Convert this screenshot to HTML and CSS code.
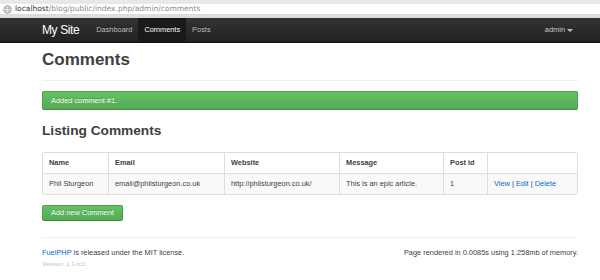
FILE: index.html
```html
<!DOCTYPE html>
<html>
<head>
<meta charset="utf-8">
<title>Comments</title>
<link rel="stylesheet" href="styles.css">
</head>
<body>
<div class="chrome">
  <svg class="globe" width="9" height="9" viewBox="0 0 9 9"><circle cx="4.5" cy="4.5" r="3.8" fill="none" stroke="#9a9a9a" stroke-width="0.9"/><ellipse cx="4.5" cy="4.5" rx="1.6" ry="3.8" fill="none" stroke="#9a9a9a" stroke-width="0.7"/><path d="M0.8 3.2H8.2M0.8 5.8H8.2" stroke="#9a9a9a" stroke-width="0.7"/></svg>
  <span class="url"><span class="host">localhost</span>/blog/public/index.php/admin/comments</span>
</div>
<div class="topbar">
  <div class="container topbar-inner">
    <a class="brand" href="#">My Site</a>
    <ul class="nav">
      <li><a href="#">Dashboard</a></li>
      <li class="active"><a href="#">Comments</a></li>
      <li><a href="#">Posts</a></li>
    </ul>
    <div class="user">admin <span class="caret"></span></div>
  </div>
</div>
<div class="container">
  <div class="page-header"><h1>Comments</h1></div>
  <div class="alert">Added comment #1.</div>
  <h2>Listing Comments</h2>
  <table class="grid">
    <thead>
      <tr><th class="c-name">Name</th><th class="c-email">Email</th><th class="c-web">Website</th><th class="c-msg">Message</th><th class="c-post">Post id</th><th class="c-act"></th></tr>
    </thead>
    <tbody>
      <tr><td>Phil Sturgeon</td><td>email@philsturgeon.co.uk</td><td>http://philsturgeon.co.uk/</td><td>This is an epic article.</td><td>1</td><td><a href="#">View</a> | <a href="#">Edit</a> | <a href="#">Delete</a></td></tr>
    </tbody>
  </table>
  <a class="btn" href="#">Add new Comment</a>
  <footer class="footer">
    <div class="foot-left">
      <p class="license"><a href="#">FuelPHP</a> is released under the MIT license.</p>
      <p class="version">Version: 1.1-rc2</p>
    </div>
    <p class="rendered">Page rendered in 0.0085s using 1.258mb of memory.</p>
  </footer>
</div>
</body>
</html>
```
FILE: styles.css
```css
* { box-sizing: border-box; }
html, body { margin: 0; padding: 0; background: #fff; }
body {
  font-family: "Liberation Sans", Arial, sans-serif;
  font-size: 7.4px;
  line-height: 10px;
  color: #404040;
}
a { color: #0069d6; text-decoration: none; }

.chrome {
  height: 18px;
  border-top: 4px solid #e8e8e8;
  border-bottom: 4px solid #dcdcdc;
  background: #fff;
  display: flex;
  align-items: center;
  padding-left: 3px;
}
.globe { display: block; margin-right: 3px; }
.url {
  font-family: "DejaVu Sans", sans-serif;
  font-size: 7.5px;
  line-height: 10px;
  color: #8a8a8a;
}
.host { color: #333; }

.container { width: 536px; margin-left: 42px; }

.topbar {
  height: 25px;
  background: linear-gradient(#333, #222);
  border-bottom: 1px solid #111;
}
.topbar-inner {
  display: flex;
  align-items: stretch;
  height: 24px;
}
.brand {
  color: #fff;
  font-size: 12px;
  letter-spacing: -0.4px;
  line-height: 24px;
  margin-right: 11px;
}
.nav {
  list-style: none;
  margin: 0;
  padding: 0;
  display: flex;
  flex: 1;
}
.nav a {
  display: block;
  color: #bfbfbf;
  line-height: 24px;
  padding: 0 6px;
  text-shadow: 0 -1px 0 rgba(0,0,0,.25);
}
.nav .active a { background: #1a1a1a; color: #fff; }
.user {
  color: #c8c8c8;
  line-height: 24px;
  padding-right: 5px;
  display: flex;
  align-items: center;
  gap: 2px;
}
.caret {
  display: inline-block;
  width: 0; height: 0;
  border-top: 3px solid #bfbfbf;
  border-left: 3px solid transparent;
  border-right: 3px solid transparent;
}

.page-header {
  margin-top: 7px;
  padding-bottom: 10px;
  border-bottom: 1px solid #eee;
}
h1 {
  margin: 0;
  font-size: 17px;
  line-height: 20px;
  font-weight: bold;
  color: #404040;
}

.alert {
  margin-top: 10px;
  height: 19px;
  padding: 0 8px;
  line-height: 17px;
  color: #fff;
  text-shadow: 0 -1px 0 rgba(0,0,0,.25);
  background: linear-gradient(#62c462, #57a957);
  border: 1px solid #4c9f4c;
  border-bottom-color: #3f8f3f;
  border-radius: 2px;
}

h2 {
  margin: 13px 0 0;
  font-size: 13.7px;
  line-height: 16px;
  font-weight: bold;
  color: #404040;
}

.grid {
  margin-top: 13px;
  width: 536px;
  table-layout: fixed;
  border-collapse: separate;
  border-spacing: 0;
  border: 1px solid #ddd;
  border-radius: 2px;
}
.grid th, .grid td {
  padding: 5px 6px;
  line-height: 10px;
  text-align: left;
  vertical-align: top;
  white-space: nowrap;
}
.grid th { font-weight: bold; background: #fff; }
.grid td { background: #f9f9f9; border-top: 1px solid #ddd; }
.grid th + th, .grid td + td { border-left: 1px solid #ddd; }
.c-name { width: 65px; }
.c-email { width: 116px; }
.c-web { width: 115px; }
.c-msg { width: 104px; }
.c-post { width: 44px; }
.c-act { width: 90px; }

.btn {
  display: inline-block;
  margin-top: 10px;
  padding: 2px 8px 3px;
  line-height: 9px;
  color: #fff;
  text-shadow: 0 -1px 0 rgba(0,0,0,.25);
  background: linear-gradient(#62c462, #57a957);
  border: 1px solid #4c9f4c;
  border-bottom-color: #3f8f3f;
  border-radius: 2px;
}

.footer {
  margin-top: 16px;
  border-top: 1px solid #eee;
  padding-top: 10px;
  display: flex;
  justify-content: space-between;
  align-items: flex-start;
}
.footer p { margin: 0; }
.license { line-height: 10px; }
.version {
  margin-top: 2px !important;
  font-size: 6.2px;
  line-height: 8px;
  color: #bfbfbf;
}
.rendered { line-height: 10px; }
```
